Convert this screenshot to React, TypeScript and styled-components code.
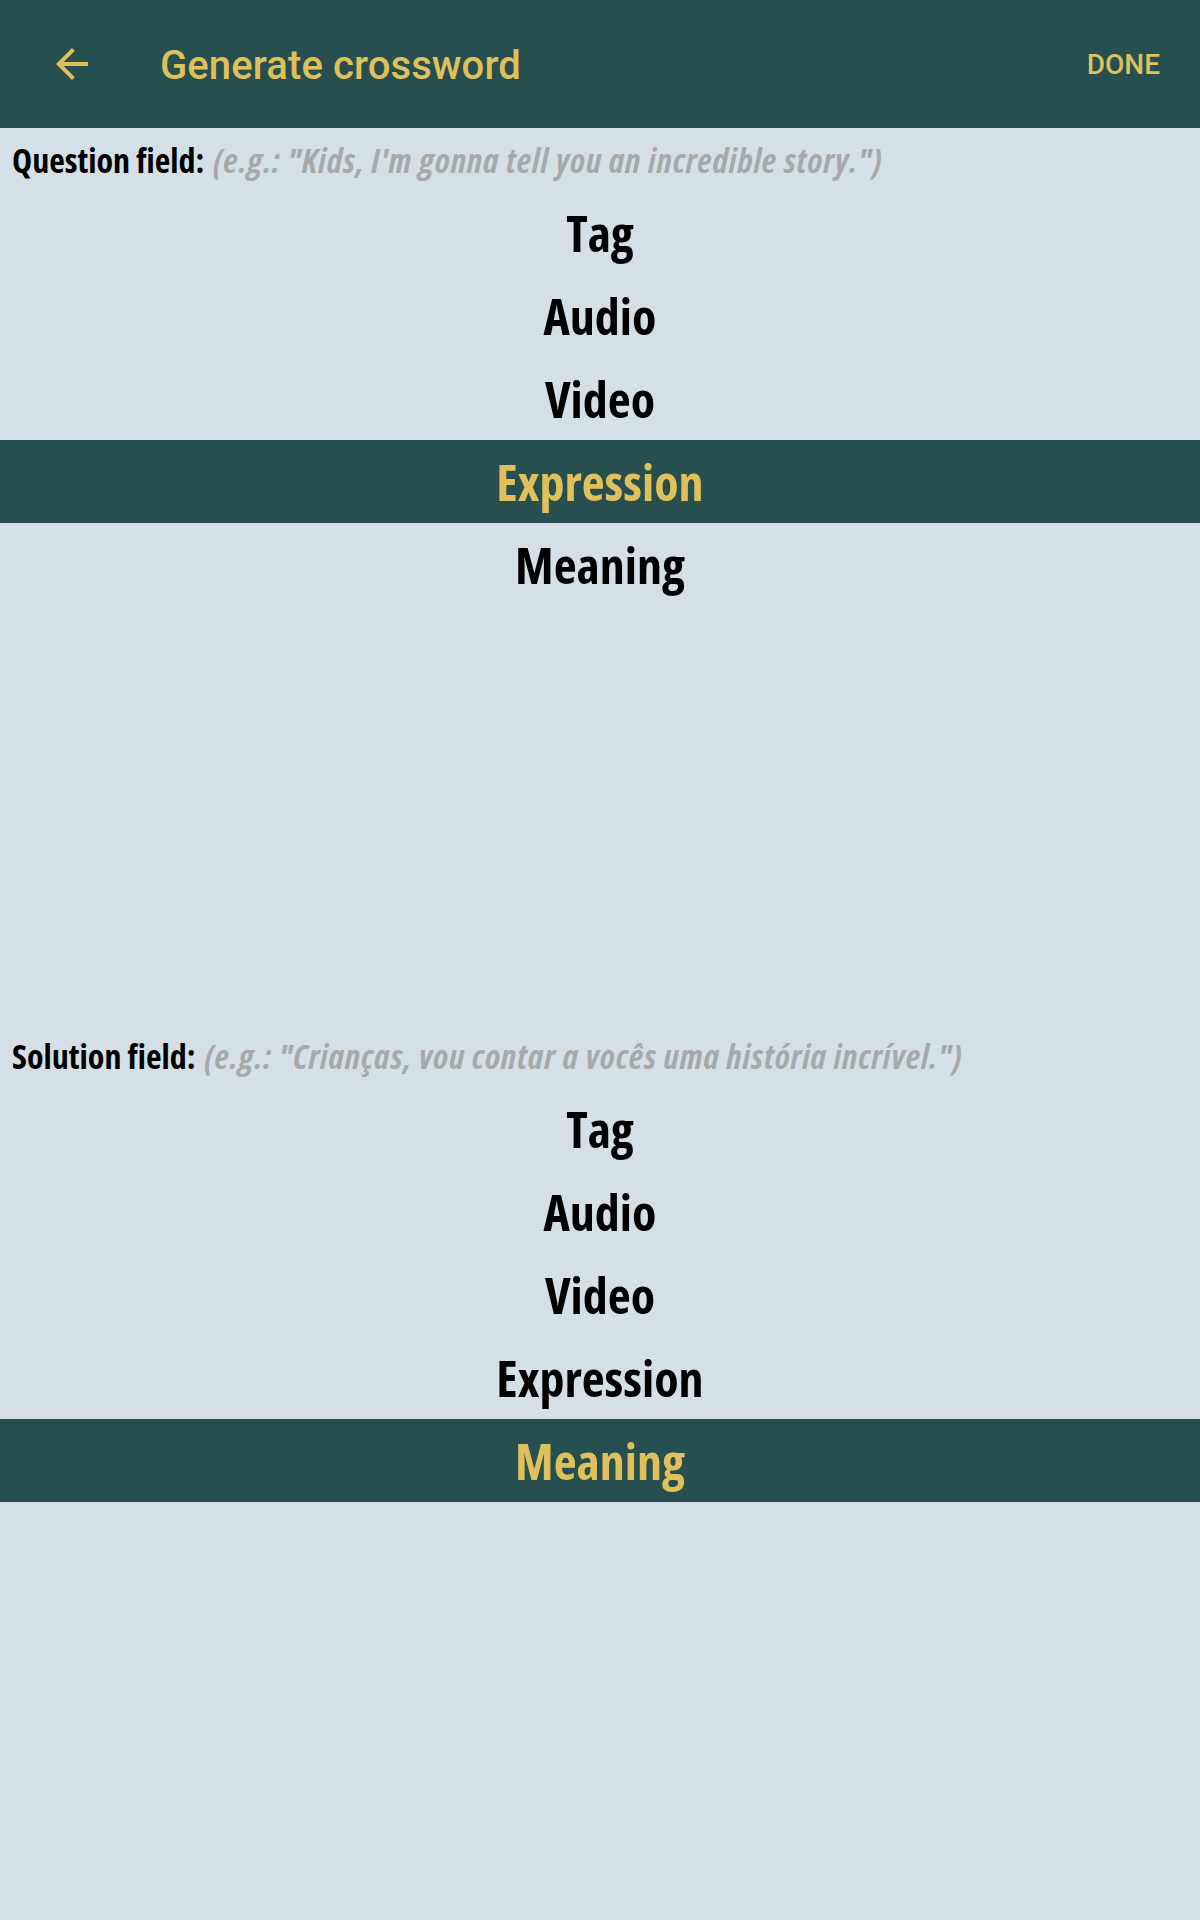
import styled, { createGlobalStyle } from "styled-components";

const GlobalStyle = createGlobalStyle`
  html, body {
    margin: 0;
    padding: 0;
    background-color: #d5e0e6;
  }
  * { box-sizing: border-box; }
`;

const Screen = styled.div`
  width: 1200px;
  height: 1920px;
  display: flex;
  flex-direction: column;
  background-color: #d5e0e6;
  overflow: hidden;
`;

const Toolbar = styled.header`
  height: 128px;
  flex-shrink: 0;
  display: flex;
  align-items: center;
  background-color: #284f50;
  color: #dfc05b;
  font-family: Roboto, "Liberation Sans", sans-serif;
`;

const BackButton = styled.button`
  width: 48px;
  height: 48px;
  margin-left: 48px;
  padding: 0;
  border: none;
  background: none;
  display: flex;
  align-items: center;
  justify-content: center;
  cursor: pointer;
`;

const Title = styled.h1`
  margin: 2px 0 0 64px;
  flex: 1;
  font-size: 40px;
  font-weight: 500;
  letter-spacing: 0.1px;
`;

const DoneButton = styled.button`
  margin-right: 40px;
  padding: 0;
  border: none;
  background: none;
  color: #dfc05b;
  font-family: Roboto, "Liberation Sans", sans-serif;
  font-size: 28px;
  font-weight: 500;
  cursor: pointer;
`;

const Section = styled.section`
  flex: 1;
  display: flex;
  flex-direction: column;
  font-family: "Open Sans", "Liberation Sans", sans-serif;
  font-stretch: 75%;
`;

const FieldLabel = styled.div`
  height: 63px;
  display: flex;
  align-items: center;
  padding-left: 12px;
  font-size: 34px;
  font-weight: 700;
  color: #000;
  white-space: nowrap;
`;

const Hint = styled.span`
  margin-left: 9px;
  color: #a6a8aa;
  font-style: italic;
  font-weight: 700;
  letter-spacing: 0.85px;
`;

const Option = styled.div<{ selected?: boolean }>`
  height: 83px;
  display: flex;
  align-items: center;
  justify-content: center;
  font-size: 50px;
  font-weight: 700;
  color: ${(props) => (props.selected ? "#dfc05b" : "#000")};
  background-color: ${(props) => (props.selected ? "#284f50" : "transparent")};
  cursor: pointer;
`;

const options = ["Tag", "Audio", "Video", "Expression", "Meaning"];

const fields = [
  {
    label: "Question field:",
    hint: '(e.g.: "Kids, I\'m gonna tell you an incredible story.")',
    selected: "Expression",
  },
  {
    label: "Solution field:",
    hint: '(e.g.: "Crianças, vou contar a vocês uma história incrível.")',
    selected: "Meaning",
  },
];

function App() {
  return (
    <Screen>
      <GlobalStyle />
      <Toolbar>
        <BackButton aria-label="Back">
          <svg width="48" height="48" viewBox="0 0 24 24">
            <path d="M20 11H7.83l5.59-5.59L12 4l-8 8 8 8 1.41-1.41L7.83 13H20v-2z" fill="#dfc05b" />
          </svg>
        </BackButton>
        <Title>Generate crossword</Title>
        <DoneButton>DONE</DoneButton>
      </Toolbar>
      {fields.map((field) => (
        <Section key={field.label}>
          <FieldLabel>
            {field.label}
            <Hint>{field.hint}</Hint>
          </FieldLabel>
          {options.map((option) => (
            <Option key={option} selected={option === field.selected}>
              {option}
            </Option>
          ))}
        </Section>
      ))}
    </Screen>
  );
}

export default App;
